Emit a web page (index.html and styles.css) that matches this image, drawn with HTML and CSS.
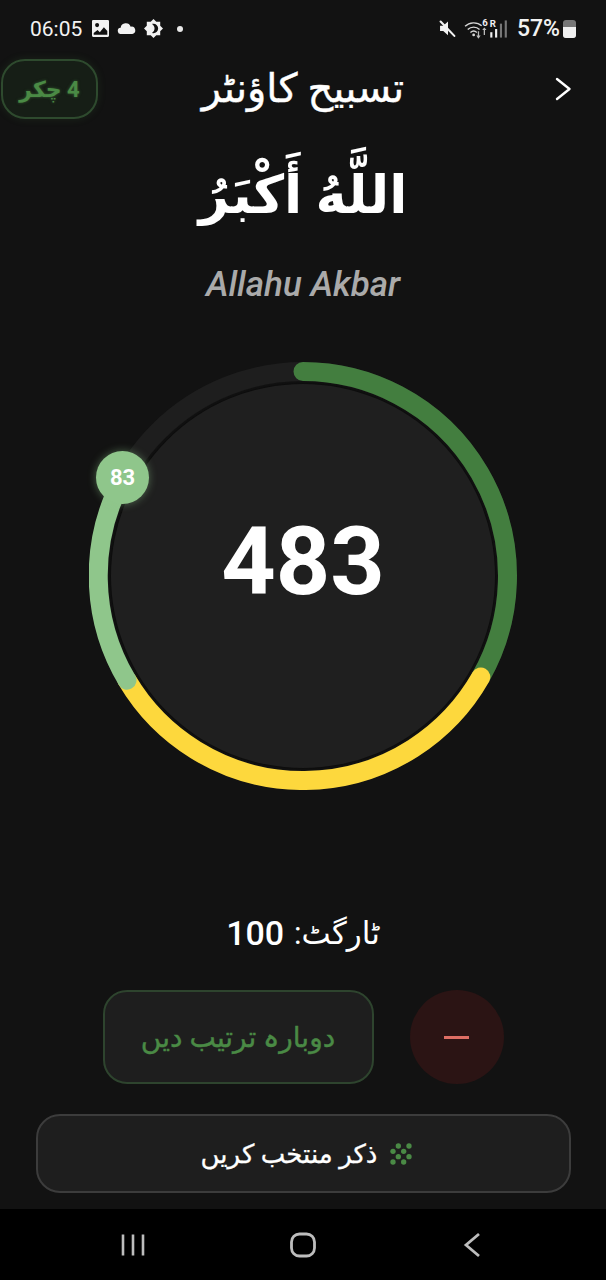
FILE: index.html
```html
<!DOCTYPE html>
<html lang="ur">
<head>
    <meta charset="UTF-8">
    <meta name="viewport" content="width=device-width, initial-scale=1.0">
    <title>تسبیح کاؤنٹر</title>
    <link rel="stylesheet" href="styles.css">
</head>
<body>
    <div class="screen">
        <div class="status-bar">
            <div class="status-left">
                <span class="clock">06:05</span>
                <svg class="status-icon picture-icon" width="17" height="17" viewBox="1.5 1.5 15 15">
                    <path fill="#f2f2f2" fill-rule="evenodd" d="M2.5 1.5h13a1 1 0 0 1 1 1v13a1 1 0 0 1-1 1h-13a1 1 0 0 1-1-1v-13a1 1 0 0 1 1-1zM6 4.2a1.8 1.8 0 1 0 0 3.6 1.8 1.8 0 0 0 0-3.6zM3 14.5h12v-3.4l-3-3.3-3.6 4.4-2-1.9L3 13z"/>
                </svg>
                <svg class="status-icon" width="19" height="11" viewBox="0 0 18 10.500">
                    <path fill="#f2f2f2" d="M4 10.500a3 3 0 0 1-.6-6A5 5 0 0 1 13 3.500a3.500 3.500 0 0 1 1.500 7z"/>
                </svg>
                <svg class="status-icon" width="19" height="19" viewBox=".8 .8 18.4 18.4">
                    <path fill="#f2f2f2" fill-rule="evenodd" d="M10 .8l2.700 2.700h3.800v3.800l2.700 2.700-2.700 2.700v3.800h-3.800L10 19.200l-2.700-2.700H3.500v-3.800L.8 10l2.700-2.700V3.500h3.800zM10 5.500a4.500 4.500 0 0 1 0 9c-1 0-1.500-.2-1.500-.2 1.500-1 2.500-2.500 2.500-4.300s-1-3.300-2.500-4.300c0 0 .5-.2 1.500-.2z"/>
                </svg>
                <span class="status-dot"></span>
            </div>
            <div class="status-right">
                <svg class="status-icon mute-icon" width="18" height="18" viewBox="1 1 17 17">
                    <path fill="#f2f2f2" d="M2 6.500h3L9.500 2.500v13L5 11.500H2z"/>
                    <path stroke="#f2f2f2" stroke-width="2" stroke-linecap="round" d="M2.500 2.500l13 13.500"/>
                </svg>
                <svg class="status-icon net-icon" width="45" height="22" viewBox="0 0 42 20">
                    <g fill="none" stroke="#d8d8d8" stroke-width="1.300">
                        <path d="M1 7.500C5 3.500 12 3 16.500 7"/>
                        <path d="M3.500 10.500c3-3 8-3 11 0"/>
                        <path d="M6 13.200c1.800-1.600 4.200-1.600 6 0"/>
                    </g>
                    <circle cx="9" cy="15.500" r="1.300" fill="#d8d8d8"/>
                    <path stroke="#bbb" stroke-width="1.200" d="M13.500 12v6M19 9.500v6"/>
                    <path fill="#bbb" d="M11.500 16h4l-2 3zM17 11l2-2.500 2 2.500z"/>
                    <rect x="24.500" y="13" width="2" height="5" fill="#f0f0f0"/>
                    <rect x="29" y="10" width="2" height="8" fill="#f0f0f0"/>
                    <rect x="33.500" y="5" width="2" height="13" fill="#777"/>
                    <rect x="38" y="2" width="2" height="16" fill="#777"/>
                    <text class="net-six" x="17" y="7.500">6</text>
                    <text class="net-r" x="24" y="8">R</text>
                </svg>
                <span class="battery-text">57%</span>
                <span class="battery"><span class="battery-fill"></span></span>
            </div>
        </div>

        <header class="app-header">
            <div class="rounds-chip" dir="rtl">4 چکر</div>
            <h1 class="app-title">تسبیح کاؤنٹر</h1>
            <svg class="forward-icon" width="18" height="26" viewBox="0 0 18 26">
                <path d="M3 3l12.500 10L3 23" fill="none" stroke="#fff" stroke-width="2.400" stroke-linecap="round" stroke-linejoin="round"/>
            </svg>
        </header>

        <main class="content">
            <div class="zikr-arabic" dir="rtl">اللَّهُ أَكْبَرُ</div>
            <div class="zikr-latin">Allahu Akbar</div>

            <div class="counter">
                <svg class="counter-ring" width="428" height="428" viewBox="0 0 428 428">
                    <circle class="ring-track" cx="214" cy="214" r="204.500"/>
                    <path class="ring-arc ring-dark" d="M214 9.500A204.500 204.500 0 0 1 391.800 315"/>
                    <path class="ring-arc ring-yellow" d="M391.800 315A204.500 204.500 0 0 1 38 318.200"/>
                    <path class="ring-arc ring-light" d="M38 318.200A204.500 204.500 0 0 1 34 116"/>
                </svg>
                <div class="counter-face">483</div>
                <div class="counter-knob">83</div>
            </div>

            <div class="target" dir="rtl">ٹارگٹ: <span class="target-num">100</span></div>

            <div class="actions">
                <button class="reset-btn" dir="rtl">دوبارہ ترتیب دیں</button>
                <button class="minus-btn"><span class="minus-bar"></span></button>
            </div>

            <button class="select-btn" dir="rtl">
                <svg class="select-icon" width="32" height="32" viewBox="0 0 24 24">
                    <g fill="#4a8a45">
                        <circle cx="10" cy="6" r="2"/><circle cx="18" cy="6" r="2"/>
                        <circle cx="6" cy="10" r="2"/><circle cx="14" cy="10" r="2"/>
                        <circle cx="10" cy="14" r="2"/><circle cx="18" cy="14" r="2"/>
                        <circle cx="6" cy="18" r="2"/><circle cx="14" cy="18" r="2"/>
                    </g>
                </svg>
                <span>ذکر منتخب کریں</span>
            </button>
        </main>

        <nav class="nav-bar">
            <svg width="28" height="26" viewBox="0 0 28 26">
                <path d="M4 2.500v21M14 2.500v21M24 2.500v21" stroke="#bdbdbd" stroke-width="2.600" fill="none"/>
            </svg>
            <svg width="28" height="26" viewBox="0 0 28 26">
                <rect x="2.500" y="2" width="23" height="22" rx="8" stroke="#bdbdbd" stroke-width="2.800" fill="none"/>
            </svg>
            <svg width="28" height="26" viewBox="0 0 28 26">
                <path d="M20 2L7 13l13 11" stroke="#bdbdbd" stroke-width="2.800" fill="none"/>
            </svg>
        </nav>
    </div>
</body>
</html>
```

FILE: styles.css
```css
* {
    box-sizing: border-box;
}

body {
    margin: 0;
    background: #121212;
    color: #fff;
    font-family: Roboto, "DejaVu Sans", sans-serif;
}

.screen {
    width: 606px;
    height: 1280px;
    display: flex;
    flex-direction: column;
    overflow: hidden;
}

.status-bar {
    height: 59px;
    padding: 0 30px 2px;
    display: flex;
    justify-content: space-between;
    align-items: center;
    font-size: 21px;
    color: #f2f2f2;
}

.status-left,
.status-right {
    display: flex;
    align-items: center;
}

.status-left {
    gap: 8px;
}

.status-icon {
    display: block;
}

.picture-icon {
    margin-left: 2px;
}

.status-dot {
    width: 6px;
    height: 6px;
    margin-left: 6px;
    border-radius: 50%;
    background: #e8e8e8;
}

.mute-icon {
    margin-right: 7px;
}

.net-icon {
    margin-right: 8px;
}

.net-six,
.net-r {
    fill: #f0f0f0;
    font-size: 9px;
    font-weight: 700;
}

.battery-text {
    font-size: 23px;
    font-weight: 500;
}

.battery {
    width: 13px;
    height: 18px;
    margin-left: 3px;
    display: flex;
    align-items: flex-end;
    border-radius: 3px;
    background: #777;
}

.battery-fill {
    width: 100%;
    height: 11px;
    border-radius: 0 0 3px 3px;
    background: #f0f0f0;
}

.app-header {
    height: 60px;
    display: grid;
    grid-template-columns: 1fr auto 1fr;
    align-items: center;
}

.rounds-chip {
    width: 97px;
    height: 60px;
    margin-left: 1px;
    display: flex;
    align-items: center;
    justify-content: center;
    border: 2px solid #2e4a2e;
    border-radius: 24px;
    background: #161e16;
    box-shadow: 0 0 8px rgba(74, 138, 69, 0.15);
    color: #4a8a45;
    font-size: 22px;
    font-weight: 700;
    text-shadow: 0 0 3px rgba(74, 138, 69, 0.6);
}

.app-title {
    margin: 0;
    font-size: 40px;
    font-weight: 400;
    line-height: 60px;
    -webkit-text-stroke: 0.4px #fff;
}

.forward-icon {
    justify-self: end;
    margin-right: 34px;
}

.content {
    flex: 1;
    display: flex;
    flex-direction: column;
    align-items: center;
}

.zikr-arabic {
    margin-top: 31px;
    height: 90px;
    font-size: 53px;
    font-weight: 700;
    line-height: 90px;
}

.zikr-latin {
    margin-top: 23px;
    height: 44px;
    color: #aaa;
    font-size: 35px;
    font-style: italic;
    font-weight: 500;
    line-height: 44px;
}

.counter {
    position: relative;
    width: 428px;
    height: 428px;
    margin-top: 55px;
}

.counter-ring {
    display: block;
}

.ring-track {
    fill: none;
    stroke: #1e1e1e;
    stroke-width: 19;
}

.ring-arc {
    fill: none;
    stroke-width: 19;
    stroke-linecap: round;
}

.ring-dark {
    stroke: #437e3f;
}

.ring-yellow {
    stroke: #fdd83d;
}

.ring-light {
    stroke: #8fc68b;
}

.counter-face {
    position: absolute;
    left: 22px;
    top: 22px;
    width: 384px;
    height: 384px;
    padding-bottom: 30px;
    display: flex;
    align-items: center;
    justify-content: center;
    border-radius: 50%;
    background: #1f1f1f;
    box-shadow: 0 0 2px 1px #0c0c0c;
    font-size: 95px;
    font-weight: 700;
}

.counter-knob {
    position: absolute;
    left: 7px;
    top: 89px;
    width: 53px;
    height: 53px;
    display: flex;
    align-items: center;
    justify-content: center;
    border-radius: 50%;
    background: #8fc68b;
    box-shadow: 0 0 8px rgba(143, 198, 139, 0.45);
    font-size: 22px;
    font-weight: 700;
}

.target {
    margin-top: 118px;
    height: 50px;
    display: flex;
    gap: 10px;
    align-items: center;
    font-size: 31px;
}

.target-num {
    font-size: 34px;
    font-weight: 500;
}

.actions {
    margin-top: 32px;
    display: flex;
    gap: 36px;
    align-items: center;
}

.reset-btn {
    width: 271px;
    height: 94px;
    border: 2px solid #2e442e;
    border-radius: 24px;
    background: #1e1e1e;
    color: #4a8a45;
    font-family: inherit;
    font-size: 28px;
    font-weight: 400;
    -webkit-text-stroke: 0.4px #4a8a45;
}

.minus-btn {
    width: 94px;
    height: 94px;
    display: flex;
    align-items: center;
    justify-content: center;
    padding: 0;
    border: none;
    border-radius: 50%;
    background: #2b1414;
}

.minus-bar {
    width: 25px;
    height: 3px;
    background: #dd6e64;
}

.select-btn {
    width: 535px;
    height: 79px;
    margin-top: 30px;
    padding-left: 18px;
    display: flex;
    gap: 8px;
    align-items: center;
    justify-content: center;
    border: 2px solid #3c3c3c;
    border-radius: 24px;
    background: #1e1e1e;
    color: #fff;
    font-family: inherit;
    font-size: 26px;
    font-weight: 400;
    -webkit-text-stroke: 0.3px #fff;
}

.nav-bar {
    height: 71px;
    padding: 0 119px;
    display: flex;
    justify-content: space-between;
    align-items: center;
    background: #000;
}
```
